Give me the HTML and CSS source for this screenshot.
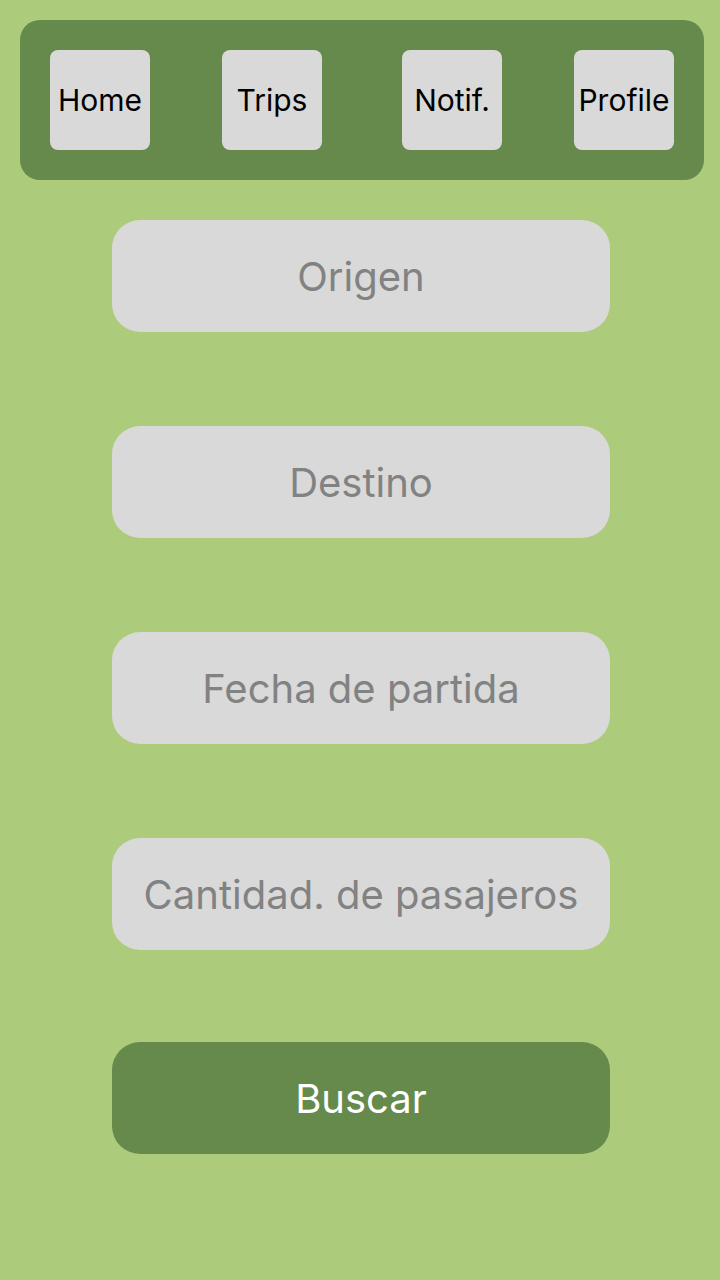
FILE: index.html
```html
<!DOCTYPE html>
<html lang="es">
<head>
<meta charset="utf-8">
<link rel="stylesheet" href="styles.css">
</head>
<body>
<div class="screen">
  <nav class="navbar">
    <div class="nav-btn">Home</div>
    <div class="nav-btn">Trips</div>
    <div class="nav-btn">Notif.</div>
    <div class="nav-btn">Profile</div>
  </nav>
  <form class="search">
    <div class="field">Origen</div>
    <div class="field">Destino</div>
    <div class="field">Fecha de partida</div>
    <div class="field">Cantidad. de pasajeros</div>
    <div class="submit">Buscar</div>
  </form>
</div>
</body>
</html>
```
FILE: styles.css
```css
* { box-sizing: border-box; }
html, body { margin: 0; padding: 0; }
body {
  background: #accb7b;
  font-family: Inter, "Noto Sans", sans-serif;
}
.screen {
  width: 720px;
  height: 1280px;
  padding: 20px 16px 0 20px;
}
.navbar {
  height: 160px;
  width: 684px;
  background: #658a4b;
  border-radius: 20px;
  display: flex;
  align-items: center;
  padding: 0 30px;
}
.nav-btn {
  width: 100px;
  height: 100px;
  background: #d9d9d9;
  border-radius: 8px;
  display: flex;
  align-items: center;
  justify-content: center;
  font-size: 30px;
  color: #000;
  white-space: nowrap;
}
.nav-btn:nth-child(2) { margin-left: 72px; }
.nav-btn:nth-child(3) { margin-left: 80px; }
.nav-btn:nth-child(4) { margin-left: 72px; }
.search {
  margin: 40px 0 0 92px;
  width: 498px;
  display: flex;
  flex-direction: column;
}
.field, .submit {
  height: 112px;
  border-radius: 28px;
  display: flex;
  align-items: center;
  justify-content: center;
  font-size: 40px;
  white-space: nowrap;
}
.field {
  background: #d9d9d9;
  color: #828282;
  margin-bottom: 94px;
}
.field:nth-child(4) { margin-bottom: 92px; }
.submit {
  background: #658a4b;
  color: #fff;
}
```
